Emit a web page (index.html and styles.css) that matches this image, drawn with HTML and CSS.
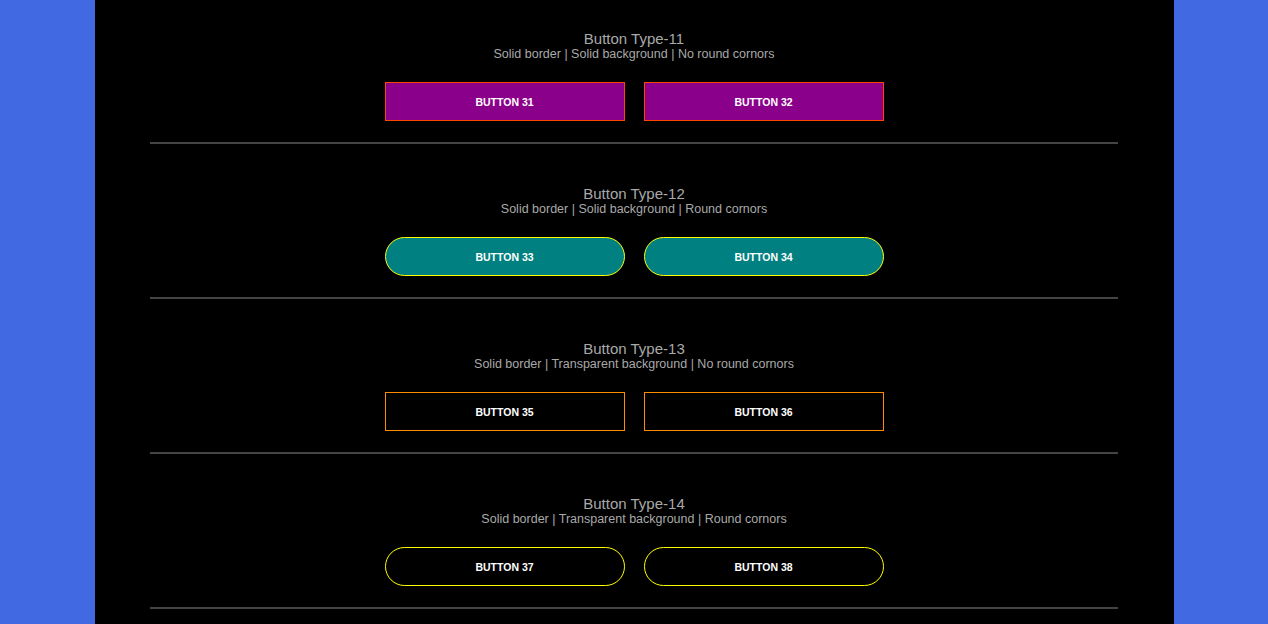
FILE: index.html
```html
<!DOCTYPE html>
<html>
<head>
<meta charset="utf-8">
<link rel="stylesheet" href="styles.css">
</head>
<body>
<div class="page">
  <section class="group">
    <h2 class="title">Button Type-11</h2>
    <p class="desc">Solid border | Solid background | No round cornors</p>
    <div class="buttons">
      <button class="btn t11">Button 31</button>
      <button class="btn t11">Button 32</button>
    </div>
    <div class="sep"></div>
  </section>
  <section class="group">
    <h2 class="title">Button Type-12</h2>
    <p class="desc">Solid border | Solid background | Round cornors</p>
    <div class="buttons">
      <button class="btn t12">Button 33</button>
      <button class="btn t12">Button 34</button>
    </div>
    <div class="sep"></div>
  </section>
  <section class="group">
    <h2 class="title">Button Type-13</h2>
    <p class="desc">Solid border | Transparent background | No round cornors</p>
    <div class="buttons">
      <button class="btn t13">Button 35</button>
      <button class="btn t13">Button 36</button>
    </div>
    <div class="sep"></div>
  </section>
  <section class="group">
    <h2 class="title">Button Type-14</h2>
    <p class="desc">Solid border | Transparent background | Round cornors</p>
    <div class="buttons">
      <button class="btn t14">Button 37</button>
      <button class="btn t14">Button 38</button>
    </div>
    <div class="sep"></div>
  </section>
</div>
</body>
</html>
```

FILE: styles.css
```css
html, body {
  margin: 0;
  padding: 0;
  background: #4169e1;
  font-family: "Liberation Sans", Arial, sans-serif;
}
.page {
  width: 1079px;
  margin: 0 auto;
  background: #000;
  padding-top: 31px;
  min-height: 700px;
}
.group {
  display: flex;
  flex-direction: column;
  align-items: center;
}
.title {
  margin: 0;
  font-size: 15px;
  line-height: 16px;
  font-weight: normal;
  color: #a9a9a9;
}
.desc {
  margin: 0;
  font-size: 12.5px;
  line-height: 14px;
  color: #a9a9a9;
}
.buttons {
  display: flex;
  gap: 19px;
  margin-top: 21px;
}
.btn {
  box-sizing: border-box;
  width: 240px;
  height: 39px;
  border: 1px solid;
  background: transparent;
  color: #fff;
  font-family: "Liberation Sans", Arial, sans-serif;
  font-weight: bold;
  font-size: 10.5px;
  text-transform: uppercase;
  padding: 0;
}
.t11 { background: #8b008b; border-color: #ff4500; }
.t12 { background: #008080; border-color: #ffff00; border-radius: 20px; }
.t13 { border-color: #ff8c00; }
.t14 { border-color: #ffff00; border-radius: 20px; }
.sep {
  width: 968px;
  height: 2px;
  background: #444;
  margin: 21px 0 42px;
}
```
